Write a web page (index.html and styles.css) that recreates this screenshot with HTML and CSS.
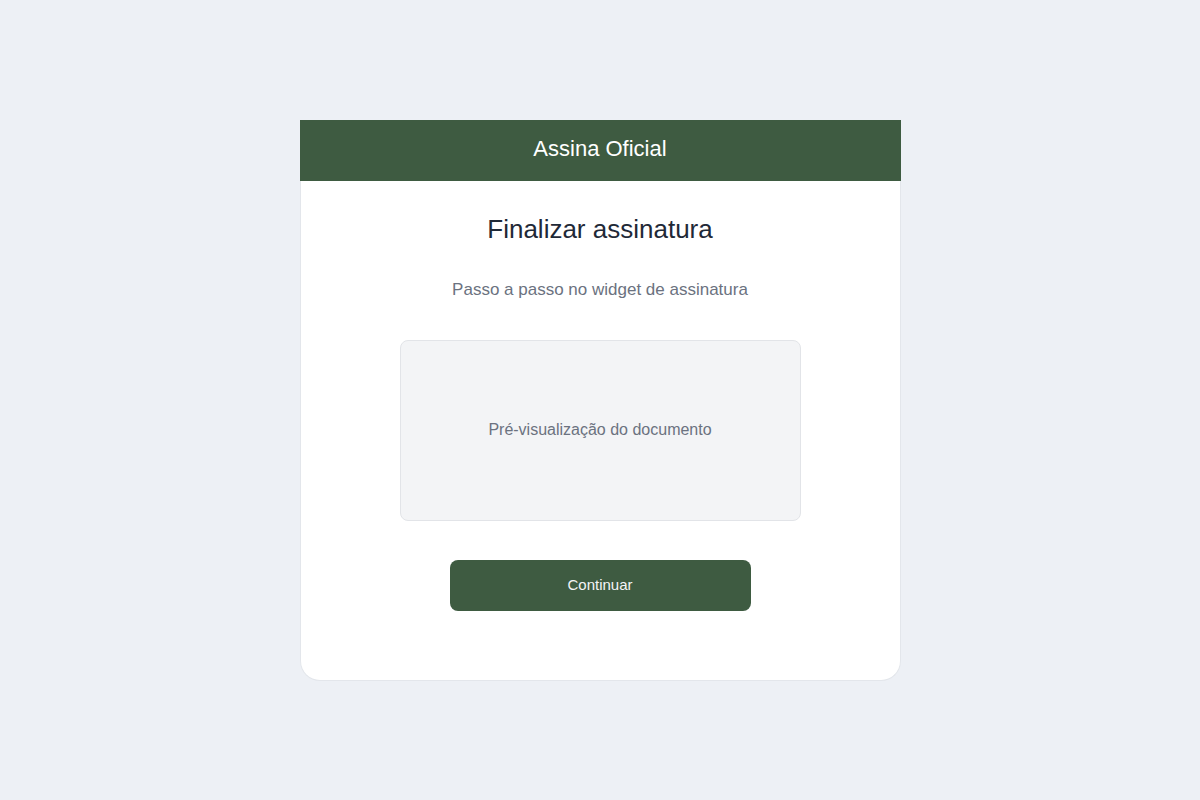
FILE: index.html
```html
<!DOCTYPE html>
<html lang="pt-BR">
<head>
<meta charset="UTF-8">
<meta name="viewport" content="width=device-width, initial-scale=1.0">
<title>Assina Oficial - Finalizar assinatura</title>
<link rel="stylesheet" href="styles.css">
</head>
<body>
<div class="wrapper">
<header class="topbar">Assina Oficial</header>
<main class="card">
<h1>Finalizar assinatura</h1>
<p class="subtitle">Passo a passo no widget de assinatura</p>
<div class="preview">Pré-visualização do documento</div>
<button class="btn-continue" type="button">Continuar</button>
</main>
</div>
</body>
</html>
```

FILE: styles.css
```css
body {
    font-family: "Liberation Sans", Arial, sans-serif;
    background-color: #edf0f5;
    margin: 0;
    padding: 120px 0 0;
}
.wrapper {
    width: 601px;
    margin: 0 auto;
}
.topbar {
    height: 61px;
    line-height: 57px;
    background-color: #3e5b41;
    color: #fff;
    font-size: 22px;
    text-align: center;
}
.card {
    box-sizing: border-box;
    background-color: #fff;
    border: 1px solid #e3e6eb;
    border-top: none;
    border-radius: 0 0 20px 20px;
    padding: 32px 0 69px;
    display: flex;
    flex-direction: column;
    align-items: center;
}
h1 {
    margin: 0;
    font-size: 26px;
    line-height: 32px;
    font-weight: normal;
    color: #1f2937;
}
.subtitle {
    margin: 33px 0 0;
    font-size: 17px;
    line-height: 24px;
    color: #6b7280;
}
.preview {
    box-sizing: border-box;
    width: 401px;
    height: 181px;
    margin-top: 38px;
    padding-bottom: 2px;
    background-color: #f3f4f6;
    border: 1px solid #e2e4e8;
    border-radius: 8px;
    display: flex;
    align-items: center;
    justify-content: center;
    font-size: 16px;
    color: #6b7280;
}
.btn-continue {
    width: 301px;
    height: 51px;
    margin-top: 39px;
    padding: 0 0 2px;
    background-color: #3e5b41;
    color: #f3f4f6;
    font-family: inherit;
    font-size: 15px;
    border: none;
    border-radius: 8px;
    cursor: pointer;
}
```
